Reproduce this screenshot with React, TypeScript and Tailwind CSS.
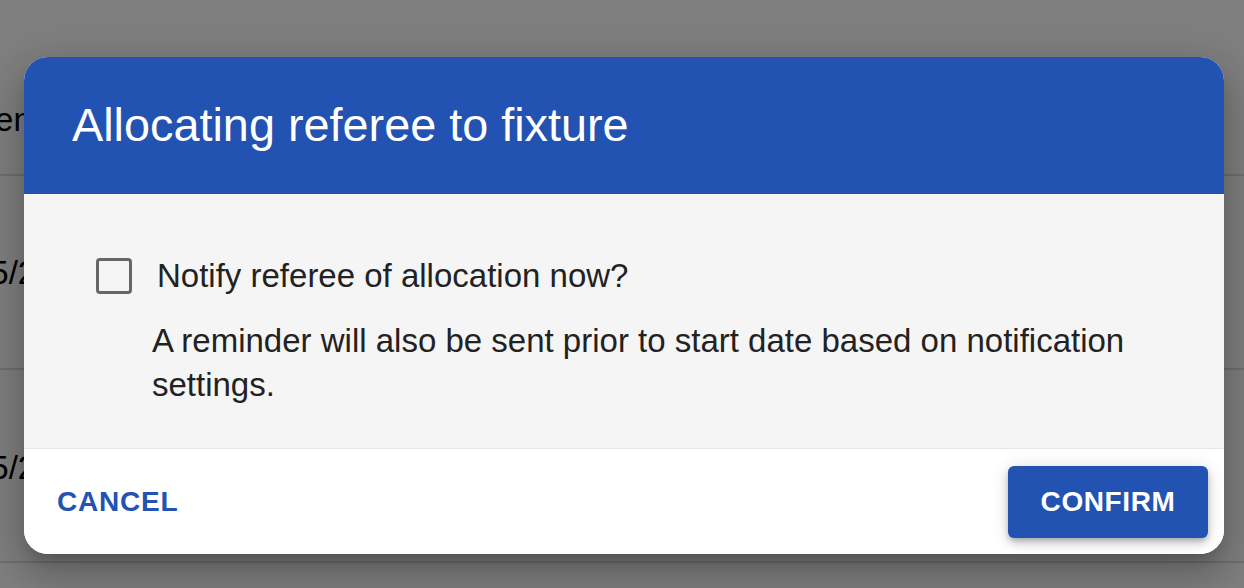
import { useState } from "react";

const rows = [
  { label: "Opponent", offset: "-ml-[104px]", height: "h-[176px]", pad: "pb-[38px]" },
  { label: "15/2/2024 10:00", offset: "-ml-[28px]", height: "h-[194px]", pad: "pb-[79px]" },
  { label: "15/2/2024 14:30", offset: "-ml-[28px]", height: "h-[193px]", pad: "pb-[77px]" },
];

export default function App() {
  const [notify, setNotify] = useState(false);

  return (
    <div className="relative h-[588px] w-[1244px] overflow-hidden bg-white font-['Liberation_Sans',Arial,sans-serif]">
      {/* Fixtures table behind the dialog */}
      <div className="flex flex-col">
        {rows.map((row) => (
          <div
            key={row.label}
            className={`flex items-end border-b-2 border-[#dedede] ${row.height} ${row.pad}`}
          >
            <span className={`whitespace-nowrap text-[33px] leading-[32px] text-black ${row.offset}`}>
              {row.label}
            </span>
          </div>
        ))}
      </div>

      {/* Backdrop */}
      <div className="absolute inset-0 flex items-start bg-black/50 pl-[24px] pt-[57px]">
        <div className="flex w-[1200px] flex-col overflow-hidden rounded-[24px] bg-white shadow-[0_11px_15px_-7px_rgba(0,0,0,0.2),0_24px_38px_3px_rgba(0,0,0,0.14),0_9px_46px_8px_rgba(0,0,0,0.12)]">
          <div className="flex h-[137px] items-center bg-[#2253b2] px-[48px] pb-[2px]">
            <h2 className="text-[46.8px] leading-[52px] text-white">Allocating referee to fixture</h2>
          </div>

          <div className="h-[255px] border-b border-[#e6e6e6] bg-[#f5f5f5] px-[72px] pt-[64px]">
            <label className="flex cursor-pointer items-center gap-[25px]">
              <input
                type="checkbox"
                checked={notify}
                onChange={(e) => setNotify(e.target.checked)}
                className="sr-only"
              />
              <span className="h-[36px] w-[36px] rounded-[4px] border-[3px] border-[#666666] bg-transparent" />
              <span className="text-[33px] leading-[36px] text-[#222222]">Notify referee of allocation now?</span>
            </label>
            <p className="mt-[25px] pl-[56px] text-[33px] leading-[44px] text-[#222222]">
              A reminder will also be sent prior to start date based on notification settings.
            </p>
          </div>

          <div className="flex h-[105px] items-center justify-between bg-white pl-[9px] pr-[16px]">
            <button className="rounded-[6px] px-[24px] py-[18px] text-[28px] font-bold uppercase tracking-[0.8px] text-[#2253b2]">
              Cancel
            </button>
            <button className="h-[72px] w-[200px] rounded-[6px] bg-[#2253b2] text-[28px] font-bold uppercase tracking-[0.6px] text-white shadow-[0_3px_5px_-1px_rgba(0,0,0,0.2),0_6px_10px_0_rgba(0,0,0,0.14),0_1px_18px_0_rgba(0,0,0,0.12)]">
              Confirm
            </button>
          </div>
        </div>
      </div>
    </div>
  );
}
